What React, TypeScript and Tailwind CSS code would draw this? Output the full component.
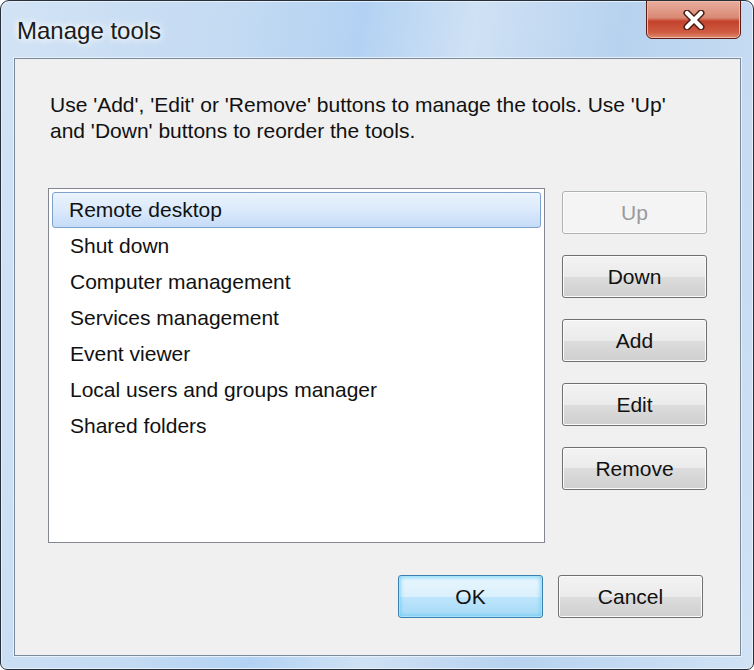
import { useState } from 'react';

const TOOLS = [
  'Remote desktop',
  'Shut down',
  'Computer management',
  'Services management',
  'Event viewer',
  'Local users and groups manager',
  'Shared folders',
];

const btnBase =
  'w-[145px] h-[43px] rounded-[3px] border text-[21px] leading-none flex items-center justify-center';
const btnNormal =
  'border-[#707070] text-[#111] bg-[linear-gradient(to_bottom,#f3f3f3_0%,#ebebeb_50%,#dddddd_50%,#cfcfcf_100%)] shadow-[inset_0_0_0_1px_#fbfbfb]';
const btnDisabled = 'border-[#adb2b5] text-[#9a9a9a] bg-[#f4f4f4] shadow-[inset_0_0_0_1px_#fcfcfc]';
const btnDefault =
  'border-[#3c7fb1] text-[#111] bg-[linear-gradient(to_bottom,#eaf6fd_0%,#d9f0fc_50%,#bee6fd_50%,#a7d9f5_100%)] shadow-[inset_0_0_0_1px_#a6e4fb,inset_0_0_4px_1px_#5fc9f3]';

function CloseGlyph() {
  return (
    <svg width="30" height="20" viewBox="0 0 30 20">
      <path d="M8 3 L22 17 M22 3 L8 17" stroke="#4a1a14" strokeWidth="7" strokeLinecap="round" />
      <path d="M8 3 L22 17 M22 3 L8 17" stroke="#ffffff" strokeWidth="4.2" strokeLinecap="round" />
    </svg>
  );
}

export default function App() {
  const [selected, setSelected] = useState(0);

  return (
    <div className="w-[754px] h-[670px] bg-white font-['Liberation_Sans',Arial,sans-serif]">
      <div className="relative w-full h-full flex flex-col rounded-t-[9px] rounded-b-[7px] border border-[#262f3a] bg-[linear-gradient(100deg,#d2e3f5_0%,#c3daf2_28%,#b3d2f3_42%,#cfe1f4_55%,#b7d2ef_72%,#d1e2f4_100%)] shadow-[inset_0_0_0_1px_#e6f0fa] overflow-hidden">
        {/* title bar */}
        <div className="h-[57px] flex items-start justify-between pl-[16px] pr-[12px]">
          <span className="mt-[15px] text-[24px] leading-[29px] text-[#1b1b1b] [text-shadow:0_0_6px_#ffffff,0_0_10px_#ffffff]">
            Manage tools
          </span>
          <button
            type="button"
            className="-mt-[1px] w-[95px] h-[39px] rounded-b-[6px] border border-[#5a1c15] bg-[linear-gradient(to_bottom,#e9ad9e_0%,#d98a75_45%,#c3412b_55%,#cf5d43_85%,#df8a6c_100%)] shadow-[inset_0_0_0_1px_#f0b9aa] flex items-center justify-center"
          >
            <CloseGlyph />
          </button>
        </div>

        {/* client area */}
        <div className="flex-1 ml-[13px] mr-[12px] mb-[13px] border border-[#7b8a9b] bg-[#f0f0f0] shadow-[0_0_0_1px_#e8f1fb] pl-[33px] flex flex-col">
          <p className="pt-[33px] pl-[2px] pr-[40px] text-[21px] leading-[26px] text-[#111]">
            Use 'Add', 'Edit' or 'Remove' buttons to manage the tools. Use 'Up' and 'Down' buttons to
            reorder the tools.
          </p>

          <div className="mt-[44px] flex gap-[17px]">
            <div className="w-[497px] h-[355px] border border-[#828790] bg-white px-[3px] pt-[3px]">
              {TOOLS.map((t, i) => (
                <div
                  key={t}
                  onClick={() => setSelected(i)}
                  className={
                    i === selected
                      ? 'h-[36px] flex items-center pl-[16px] rounded-[3px] border border-[#7da2ce] bg-[linear-gradient(to_bottom,#ebf3fd_0%,#dbeafc_50%,#c5dbf7_100%)] text-[21px] text-[#111]'
                      : 'h-[36px] flex items-center pl-[17px] border border-transparent text-[21px] text-[#111]'
                  }
                >
                  {t}
                </div>
              ))}
            </div>

            <div className="pt-[3px] flex flex-col gap-[21px]">
              <button type="button" className={`${btnBase} ${btnDisabled}`}>
                Up
              </button>
              <button type="button" className={`${btnBase} ${btnNormal}`}>
                Down
              </button>
              <button type="button" className={`${btnBase} ${btnNormal}`}>
                Add
              </button>
              <button type="button" className={`${btnBase} ${btnNormal}`}>
                Edit
              </button>
              <button type="button" className={`${btnBase} ${btnNormal}`}>
                Remove
              </button>
            </div>
          </div>

          <div className="mt-[32px] flex justify-end gap-[15px] pr-[37px]">
            <button type="button" className={`${btnBase} ${btnDefault}`}>
              OK
            </button>
            <button type="button" className={`${btnBase} ${btnNormal}`}>
              Cancel
            </button>
          </div>
        </div>
      </div>
    </div>
  );
}
